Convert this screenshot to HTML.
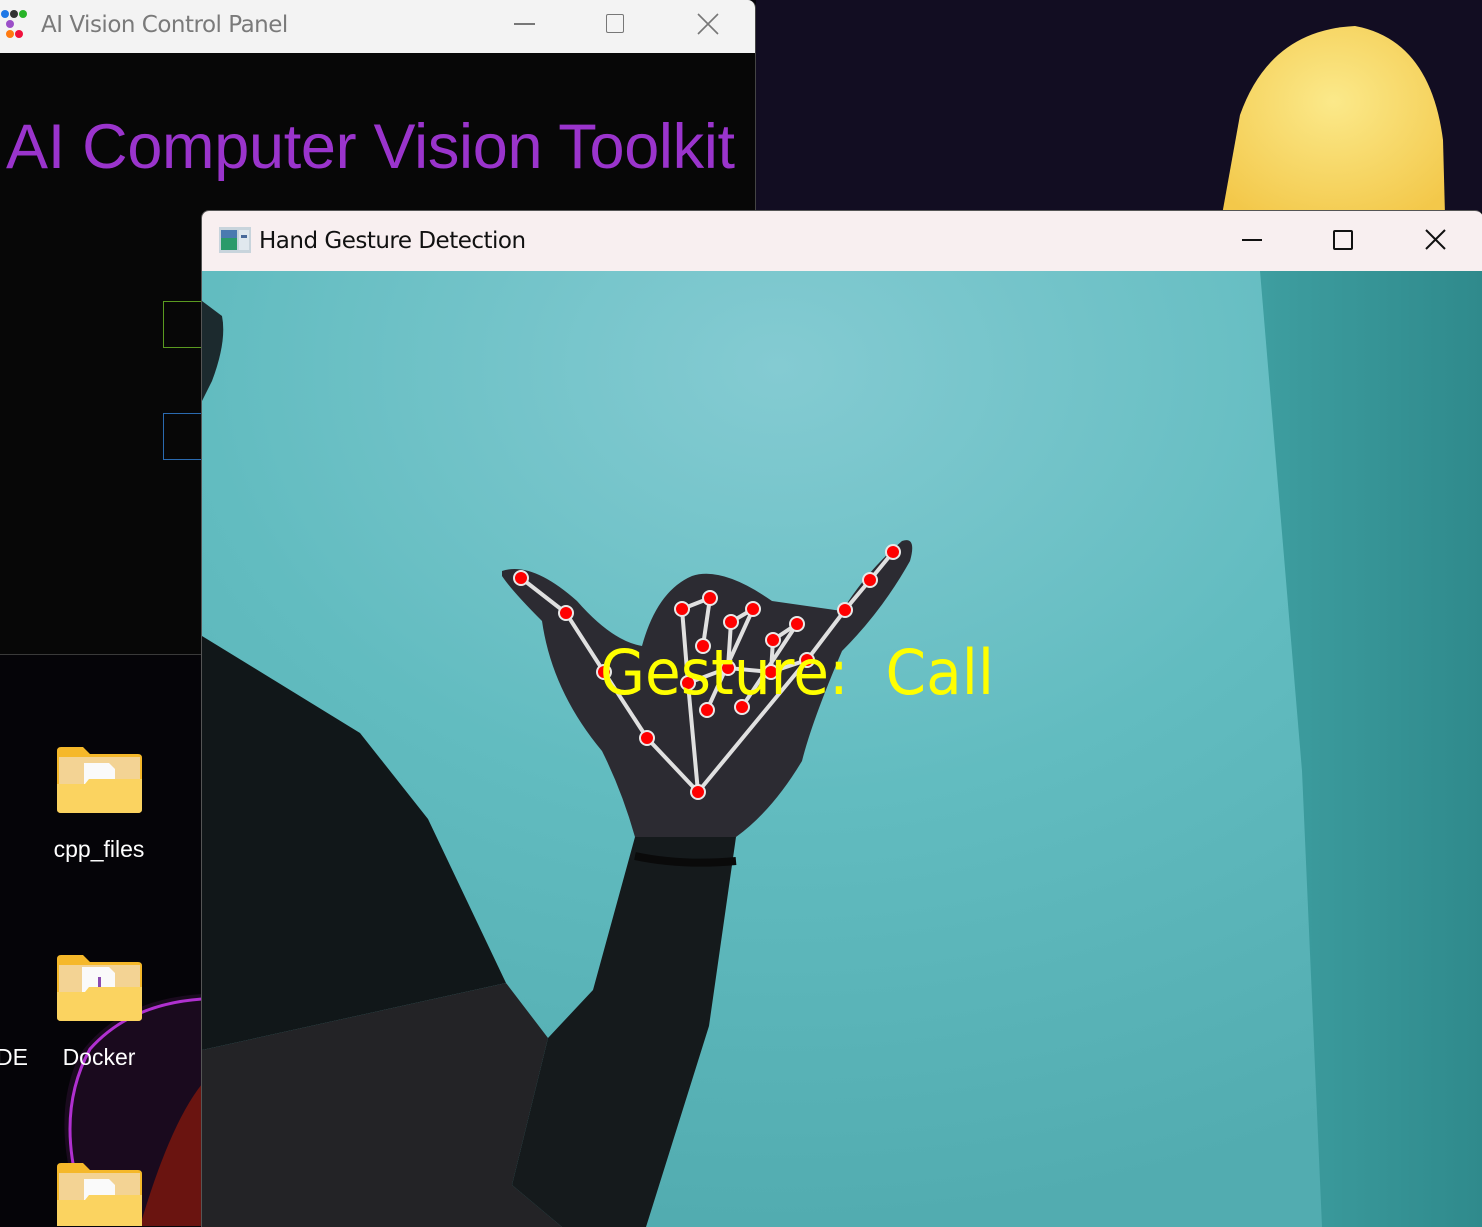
<!DOCTYPE html>
<html><head><meta charset="utf-8"><style>
html,body{margin:0;padding:0;width:1482px;height:1226px;overflow:hidden;background:#05040a;font-family:"Liberation Sans",sans-serif;}
.abs{position:absolute}
</style></head><body>
<div class="abs" style="left:756px;top:0;width:726px;height:212px;background:#120d22"></div>
<svg class="abs" style="left:1200px;top:20px" width="260" height="200"><defs><radialGradient id="cg" cx="0.5" cy="0.4" r="0.7"><stop offset="0" stop-color="#fbe98a"/><stop offset="1" stop-color="#f3c84a"/></radialGradient></defs><path d="M22 195 L40 95 Q70 10 155 6 Q230 20 243 120 L245 195 Z" fill="url(#cg)"/></svg>
<div class="abs" style="left:0;top:654px;width:202px;height:572px;background:#050408"></div>
<svg class="abs" style="left:0;top:654px" width="202" height="572"><path d="M202 340 Q120 345 80 400 Q55 450 70 520 L90 572 L202 572 Z" fill="#1a0a1e"/><path d="M202 345 Q130 350 90 395 Q60 450 75 520" stroke="#b030d0" stroke-width="3" fill="none"/><path d="M140 572 Q170 470 202 430 L202 572Z" fill="#6a1410"/></svg>
<svg class="abs" style="left:57px;top:747px" width="85" height="66"><path d="M0 4 Q0 0 4 0 L26 0 L33 7 L81 7 Q85 7 85 11 L85 62 Q85 66 81 66 L4 66 Q0 66 0 62Z" fill="#f5b82a"/><path d="M2 10 L83 10 L83 40 L2 40Z" fill="#f3d394"/><path d="M27 16 L52 16 L58 22 L58 40 L27 40Z" fill="#fafafa"/><path d="M0 37 L28 37 L32 32 L85 32 L85 62 Q85 66 81 66 L4 66 Q0 66 0 62Z" fill="#fbd360"/></svg>
<div class="abs" style="left:40px;top:836px;width:118px;text-align:center;color:#fff;font-size:23px">cpp_files</div>
<svg class="abs" style="left:57px;top:955px" width="85" height="66"><path d="M0 4 Q0 0 4 0 L26 0 L33 7 L81 7 Q85 7 85 11 L85 62 Q85 66 81 66 L4 66 Q0 66 0 62Z" fill="#f5b82a"/><path d="M2 10 L83 10 L83 40 L2 40Z" fill="#f3d394"/><path d="M25 12 L52 12 L58 18 L58 40 L25 40Z" fill="#fafafa"/><rect x="41" y="22" width="3" height="12" fill="#8a4ab0"/><path d="M0 37 L28 37 L32 32 L85 32 L85 62 Q85 66 81 66 L4 66 Q0 66 0 62Z" fill="#fbd360"/></svg>
<div class="abs" style="left:40px;top:1044px;width:118px;text-align:center;color:#fff;font-size:23px">Docker</div>
<div class="abs" style="left:-4px;top:1044px;color:#fff;font-size:23px">DE</div>
<svg class="abs" style="left:57px;top:1163px" width="85" height="63"><path d="M0 4 Q0 0 4 0 L26 0 L33 7 L81 7 Q85 7 85 11 L85 66 L0 66Z" fill="#f5b82a"/><path d="M2 10 L83 10 L83 40 L2 40Z" fill="#f3d394"/><path d="M27 16 L52 16 L58 22 L58 40 L27 40Z" fill="#fafafa"/><path d="M0 37 L28 37 L32 32 L85 32 L85 66 L0 66Z" fill="#fbd360"/></svg>
<div class="abs" style="left:0;top:0;width:755px;height:654px;background:#070707;border-right:1px solid #444;border-bottom:1px solid #3a3a3a;border-radius:0 8px 0 0;overflow:hidden">
 <div style="height:53px;background:#f3f3f3;position:relative">
  <svg class="abs" style="left:0;top:8px" width="30" height="34"><circle cx="5" cy="6" r="4" fill="#1e78e6"/><circle cx="14" cy="6" r="4" fill="#333"/><circle cx="23" cy="6" r="4" fill="#28b428"/><circle cx="10" cy="16" r="4" fill="#9b4fc8"/><circle cx="10" cy="26" r="4" fill="#ff7a10"/><circle cx="19" cy="26" r="4" fill="#f0103c"/></svg>
  <div class="abs" style="left:41px;top:12px;font-size:23px;color:#7a7a7a;font-family:'DejaVu Sans','Liberation Sans',sans-serif;letter-spacing:-0.5px">AI Vision Control Panel</div>
  <div class="abs" style="left:514px;top:23px;width:21px;height:1.5px;background:#777"></div>
  <div class="abs" style="left:606px;top:14px;width:16px;height:17px;border:1.5px solid #777;border-radius:2px"></div>
  <svg class="abs" style="left:697px;top:13px" width="22" height="22"><path d="M1 1L21 21M21 1L1 21" stroke="#777" stroke-width="1.6"/></svg>
 </div>
 <div class="abs" style="left:6px;top:111px;font-size:63px;color:#9a34cc;white-space:nowrap;letter-spacing:-0.3px">AI Computer Vision Toolkit</div>
 <div class="abs" style="left:163px;top:301px;width:60px;height:45px;border:1px solid #5a9a20"></div>
 <div class="abs" style="left:163px;top:413px;width:60px;height:45px;border:1px solid #2a6ab0"></div>
</div>
<div class="abs" style="left:201px;top:210px;width:1281px;height:1016px;border-radius:8px 8px 0 0;overflow:hidden;border-left:1px solid #555;border-top:1px solid #555">
 <div style="height:60px;background:#f8eff0;position:relative">
  <svg class="abs" style="left:17px;top:16px" width="32" height="26"><rect x="0" y="0" width="32" height="26" fill="#c8d4dc"/><rect x="2" y="3" width="16" height="20" fill="#2a9a6a"/><rect x="2" y="3" width="16" height="8" fill="#4a7ab0"/><rect x="20" y="3" width="10" height="20" fill="#e0e8ee"/><rect x="22" y="8" width="6" height="3" fill="#4a6a9a"/></svg>
  <div class="abs" style="left:57px;top:17px;font-size:23px;color:#111;font-family:'DejaVu Sans','Liberation Sans',sans-serif;letter-spacing:-0.5px">Hand Gesture Detection</div>
  <div class="abs" style="left:1040px;top:28px;width:20px;height:2px;background:#111"></div>
  <div class="abs" style="left:1131px;top:19px;width:16px;height:16px;border:2px solid #111;border-radius:2px"></div>
  <svg class="abs" style="left:1223px;top:18px" width="22" height="22"><path d="M1 1L20 20M20 1L1 20" stroke="#111" stroke-width="2"/></svg>
 </div>
 <svg width="1281" height="956" style="display:block">
  <defs>
   <radialGradient id="wall" cx="0.45" cy="0.1" r="0.9"><stop offset="0" stop-color="#84cbd2"/><stop offset="0.5" stop-color="#62bcc0"/><stop offset="1" stop-color="#52acb0"/></radialGradient>
   <linearGradient id="rs" x1="0" x2="1"><stop offset="0" stop-color="#3e9ea0"/><stop offset="1" stop-color="#2f8a8c"/></linearGradient>
  </defs>
  <rect width="1281" height="956" fill="url(#wall)"/>
  <path d="M1058 0 L1281 0 L1281 956 L1120 956 L1100 500 Z" fill="url(#rs)"/>
  <path d="M0 30 L20 45 Q25 70 10 110 L0 130Z" fill="#1c2a2e"/>
  <path d="M0 365 L158 462 L226 548 L304 712 L0 779Z" fill="#111719"/>
  <path d="M0 779 L304 712 L346 767 L310 914 L360 956 L0 956Z" fill="#232326"/>
  <path d="M433 566 L534 566 L507 755 L444 956 L360 956 L310 914 L346 767 L391 719Z" fill="#151a1c"/>
  <path d="M300 300 Q330 290 375 330 Q410 370 440 375 Q455 320 490 305 Q520 295 570 330 L640 340 Q665 300 700 270 Q715 265 708 290 Q680 340 640 380 Q610 450 600 490 Q570 540 534 566 L433 566 Q420 520 400 480 Q350 420 340 350 Q310 320 300 305Z" fill="#2c2b32"/>
  <path d="M433 585 Q480 595 534 590" stroke="#0a0a0a" stroke-width="8" fill="none"/>
  <g stroke="#e0e0e0" stroke-width="4" fill="none" transform="translate(-202,-271)">
   <polyline points="698,792 647,738 604,672 566,613 521,578"/>
   <polyline points="698,792 688,683 682,609 710,598 703,646"/>
   <polyline points="688,683 728,668 771,672 807,660 698,792"/>
   <polyline points="728,668 731,622 753,609 707,710"/>
   <polyline points="771,672 773,640 797,624 742,707"/>
   <polyline points="807,660 845,610 870,580 893,552"/>
  </g>
  <g fill="#ff0000" stroke="#e8e8e8" stroke-width="2" transform="translate(-202,-271)">
   <circle cx="698" cy="792" r="7"/><circle cx="647" cy="738" r="7"/><circle cx="604" cy="672" r="7"/><circle cx="566" cy="613" r="7"/><circle cx="521" cy="578" r="7"/>
   <circle cx="688" cy="683" r="7"/><circle cx="682" cy="609" r="7"/><circle cx="710" cy="598" r="7"/><circle cx="703" cy="646" r="7"/>
   <circle cx="728" cy="668" r="7"/><circle cx="731" cy="622" r="7"/><circle cx="753" cy="609" r="7"/><circle cx="707" cy="710" r="7"/>
   <circle cx="771" cy="672" r="7"/><circle cx="773" cy="640" r="7"/><circle cx="797" cy="624" r="7"/><circle cx="742" cy="707" r="7"/>
   <circle cx="807" cy="660" r="7"/><circle cx="845" cy="610" r="7"/><circle cx="870" cy="580" r="7"/><circle cx="893" cy="552" r="7"/>
  </g>
  <text x="398" y="423" fill="#ffff00" font-family="DejaVu Sans, Liberation Sans, sans-serif" font-size="62" textLength="394" lengthAdjust="spacingAndGlyphs" style="white-space:pre">Gesture:  Call</text>
 </svg>
</div>
</body></html>
